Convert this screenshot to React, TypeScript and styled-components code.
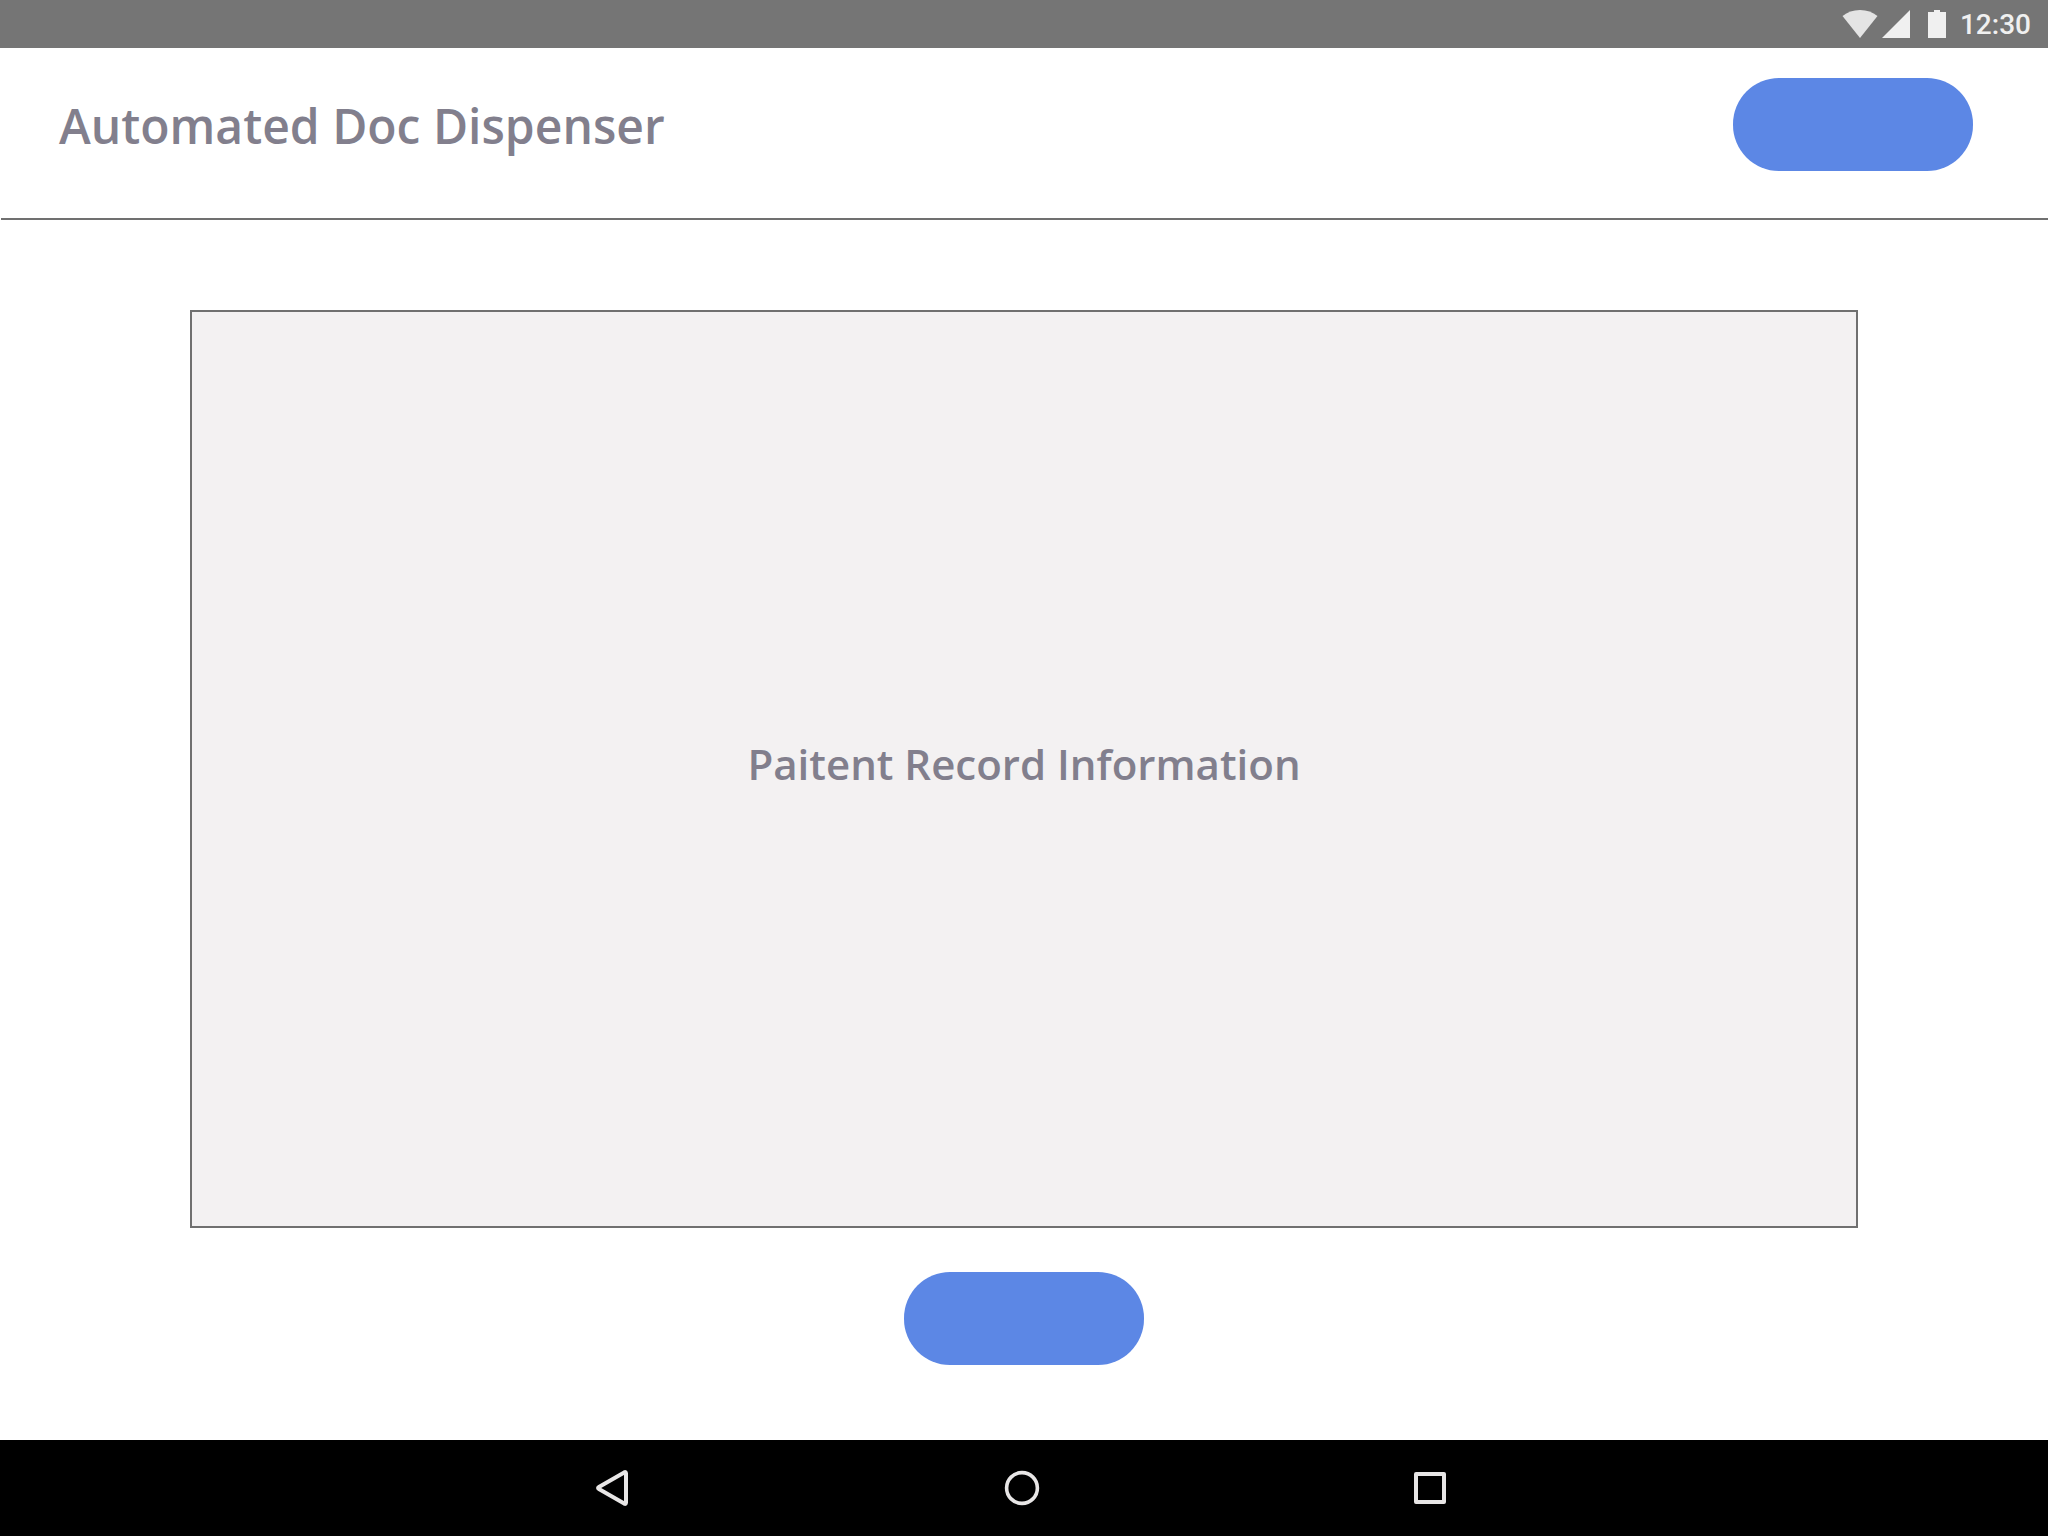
import React from "react";
import styled, { createGlobalStyle } from "styled-components";

const GlobalStyle = createGlobalStyle`
  *, *::before, *::after { box-sizing: border-box; }
  body { margin: 0; background: #fff; }
`;

const Screen = styled.div`
  display: flex;
  flex-direction: column;
  min-height: 100vh;
  font-family: "Open Sans", "Noto Sans", sans-serif;
  font-weight: 600;
  color: #827f8d;
`;

const StatusBar = styled.div`
  display: flex;
  align-items: center;
  justify-content: flex-end;
  height: 48px;
  padding-right: 17px;
  background: #757575;
`;

const StatusIcon = styled.svg<{ $gap: number }>`
  display: block;
  height: 28px;
  margin-right: ${({ $gap }) => $gap}px;
`;

const Clock = styled.time`
  padding-top: 2px;
  font-family: Roboto, sans-serif;
  font-size: 28px;
  font-weight: 500;
  line-height: 32px;
  color: #f0f0f0;
`;

const Header = styled.header`
  display: flex;
  align-items: center;
  justify-content: space-between;
  margin-left: 1px;
  padding: 30px 75px 47px 58px;
  border-bottom: 2px solid #707070;
`;

const Title = styled.h1`
  margin: 0;
  padding-top: 2px;
  font-size: 48px;
  font-weight: 600;
  line-height: 64px;
`;

const PillButton = styled.button`
  flex: none;
  width: 240px;
  height: 93px;
  padding: 0;
  border: 0;
  border-radius: 46px;
  background: #5c87e5;
  cursor: pointer;
`;

const Main = styled.main`
  display: flex;
  flex: 1;
  flex-direction: column;
  align-items: center;
  gap: 44px;
  padding: 90px 190px 75px;
`;

const RecordPanel = styled.section`
  display: flex;
  flex: 1;
  align-self: stretch;
  align-items: center;
  justify-content: center;
  padding-bottom: 10px;
  border: 2px solid #707070;
  background: #f3f1f2;
`;

const PanelTitle = styled.h2`
  margin: 0;
  font-size: 42px;
  font-weight: 600;
  line-height: 56px;
`;

const NavBar = styled.nav`
  display: flex;
  align-items: center;
  justify-content: center;
  gap: 360px;
  height: 96px;
  padding-right: 4px;
  background: #000;
`;

const NavButton = styled.button`
  display: block;
  width: 48px;
  height: 48px;
  padding: 0;
  border: 0;
  background: none;
  color: #e8e6e6;
  cursor: pointer;

  svg {
    display: block;
    fill: none;
    stroke: currentColor;
    stroke-width: 4;
    stroke-linejoin: round;
  }
`;

export default function App() {
  return (
    <Screen>
      <GlobalStyle />
      <StatusBar>
        <StatusIcon $gap={4} width="36" viewBox="0 0 36 28" aria-hidden="true">
          <path d="M0.500 6C5.500 2 11 0 18 0s12.500 2 17.500 6L18 28z" fill="#e4e4e4" />
        </StatusIcon>
        <StatusIcon $gap={18} width="28" viewBox="0 0 28 28" aria-hidden="true">
          <path d="M28 0v28H0z" fill="#f0f0f0" />
        </StatusIcon>
        <StatusIcon $gap={14} width="18" viewBox="0 0 18 28" aria-hidden="true">
          <path d="M6 0h6v2h6v26H0V2h6z" fill="#f0f0f0" />
        </StatusIcon>
        <Clock>12:30</Clock>
      </StatusBar>
      <Header>
        <Title>Automated Doc Dispenser</Title>
        <PillButton type="button" aria-label="Account" />
      </Header>
      <Main>
        <RecordPanel>
          <PanelTitle>Paitent Record Information</PanelTitle>
        </RecordPanel>
        <PillButton type="button" aria-label="Dispense" />
      </Main>
      <NavBar aria-label="System">
        <NavButton type="button" aria-label="Back">
          <svg width="48" height="48" viewBox="0 0 48 48">
            <path d="M8.9 23 34.2 8.4Q36 7.5 36 9.5V38.5Q36 40.5 34.2 39.6L8.9 25Q7.2 24 8.9 23Z" />
          </svg>
        </NavButton>
        <NavButton type="button" aria-label="Home">
          <svg width="48" height="48" viewBox="0 0 48 48">
            <circle cx="24" cy="24" r="15.4" strokeWidth="3.600" />
          </svg>
        </NavButton>
        <NavButton type="button" aria-label="Recent apps">
          <svg width="48" height="48" viewBox="0 0 48 48">
            <rect x="10" y="10" width="28" height="28" />
          </svg>
        </NavButton>
      </NavBar>
    </Screen>
  );
}
